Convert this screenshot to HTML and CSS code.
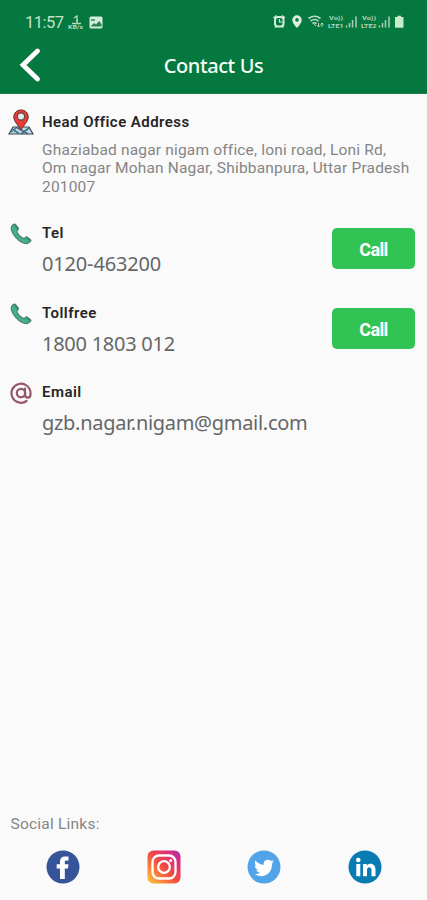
FILE: index.html
```html
<!DOCTYPE html>
<html lang="en">
<head>
<meta charset="utf-8">
<title>Contact Us</title>
<link rel="stylesheet" href="styles.css">
</head>
<body>
<svg width="0" height="0" class="defs" aria-hidden="true">
  <symbol id="phone" viewBox="0 0 22 22">
    <path d="M3.300 1.500 1.400 3.700C.2 9.700 9.200 20.400 17 20.700l3.400-2.300c.7-.6.6-1.300 0-1.800l-3-2.300c-.8-.5-1.500-.4-2 .2l-1.100 1.300C10.800 14.800 7.400 11.200 6.700 8.100L8 6.700c.6-.6.5-1.200.1-1.900L5.500 1.700c-.7-.8-1.500-.9-2.200-.2Z" fill="#3fb48e" stroke="#527d70" stroke-width="1.200"/>
    <path d="m5 2.500 2.600 3.200M16.800 14.900l3 2.700" stroke="#357d67" stroke-width="1.200"/>
  </symbol>
</svg>
<header class="header">
  <div class="status">
    <span class="time">11:57</span>
    <svg class="speed" width="16" height="16" viewBox="0 0 16 16"><path d="m6 4 3-2v7M4 9.500h9M10 6.500H8" fill="none" stroke="#b6d8bf" stroke-width="1.300"/><text x="0" y="14.500" class="tiny" textLength="15" lengthAdjust="spacingAndGlyphs">KB/s</text></svg>
    <svg class="photo" width="14" height="13" viewBox="0 0 14 13"><rect x=".5" y=".5" width="13" height="12" rx="1.500" fill="#d6ebd9"/><path d="m2 10 3-3 2 1.500L10 5l2.500 3v2.500H2Z" fill="#28854e"/><path d="M2 3h4v2H2Z" fill="#56a174"/></svg>
    <svg class="indicators" width="134" height="16" viewBox="0 0 134 16">
      <g fill="none" stroke="#d7ecd9">
        <rect x="3" y="3" width="8.500" height="9.500" rx="3" stroke-width="2"/>
        <path d="m1.500 4 3-2.500M10 1.500l3 2.500M3 13.500l2-1.500M9.500 12l2 1.500" stroke-width="1.500"/>
        <path d="M7.500 5v3H10" stroke-width="1.200"/>
      </g>
      <path d="M25 1.300A4.700 4.700 0 0 0 20.300 6c0 3.500 4.700 8 4.700 8s4.700-4.500 4.700-8A4.700 4.700 0 0 0 25 1.300Z" fill="#def0df"/><circle cx="25" cy="5.900" r="1.800" fill="#04783e"/>
      <g fill="none" stroke="#b9d9c1" stroke-width="1.600"><path d="M36.500 4.500q6-4.500 12 0M38.500 7q4-3 8 0M40.500 9.500q2-1.500 4 0"/><path d="m42 10 2 2M46.500 9v4m-1.500-1.500 1.500 1.500 1.500-1.500M50 13V9m-1.500 1.500L50 9l1.500 1.500" stroke-width="1"/></g>
      <g class="lte"><text x="57" y="6.300" textLength="14" lengthAdjust="spacingAndGlyphs">Vo))</text><text x="56" y="14" textLength="15.500" lengthAdjust="spacingAndGlyphs">LTE1</text><text x="90" y="6.300" textLength="14" lengthAdjust="spacingAndGlyphs">Vo))</text><text x="89" y="14" textLength="15.500" lengthAdjust="spacingAndGlyphs">LTE2</text></g>
      <path d="M74.500 13.500v-2M77.500 13.500V9M80.500 13.500V6M84 13.500V2.500M107.500 13.500v-2M110.500 13.500V9M113.500 13.500V6M117 13.500V2.500" stroke="#a9d0b5" stroke-width="1.500"/>
      <path d="M123.500 3h2V1.700h3.500V3h2q.5 0 .5.500V13q0 .8-.8.800h-7q-.7 0-.7-.8V3.500q0-.5.500-.5Z" fill="#c8edc9"/>
    </svg>
  </div>
  <div class="appbar">
    <svg class="back" width="22" height="36" viewBox="0 0 22 36"><path d="M18.500 4 4 18l14.500 14" fill="none" stroke="#fff" stroke-width="4.800" stroke-linecap="round"/></svg>
    <h1 class="title">Contact Us</h1>
  </div>
</header>
<main class="main">
  <section class="row address">
    <svg class="icon" width="26" height="26" viewBox="0 0 26 26">
      <path d="M5 18h16l4 7H1Z" fill="#bfd9e5" stroke="#354854" stroke-width="1.200"/>
      <path d="m4 20 7 4.500M8 18l12 7M21 19l-8 6M3 23l5-4" stroke="#446c83" stroke-width="1.600"/>
      <path d="M13 1C8.700 1 5.800 4 5.800 8c0 4.500 4.500 8 7.200 13 2.700-5 7.200-8.500 7.200-13C20.200 4 17.300 1 13 1Z" fill="#e63c32" stroke="#5e3030" stroke-width="1"/>
      <circle cx="13" cy="7.500" r="3.600" fill="#dfecef" stroke="#66474a" stroke-width="1.200"/>
    </svg>
    <div class="info"><h2 class="label head">Head Office Address</h2><p class="street">Ghaziabad nagar nigam office, loni road, Loni Rd,<br>Om nagar Mohan Nagar, Shibbanpura, Uttar Pradesh<br>201007</p></div>
  </section>
  <section class="row">
    <svg class="icon phone"><use href="#phone"/></svg>
    <div class="info"><h2 class="label">Tel</h2><p class="value">0120-463200</p></div>
    <button class="call">Call</button>
  </section>
  <section class="row">
    <svg class="icon phone"><use href="#phone"/></svg>
    <div class="info"><h2 class="label">Tollfree</h2><p class="value toll">1800 1803 012</p></div>
    <button class="call">Call</button>
  </section>
  <section class="row">
    <svg class="icon phone" viewBox="0 0 22 22"><g fill="none" stroke="#95566c" stroke-linecap="round"><path d="M16.500 19A9.500 9.500 0 1 1 20.500 11v1.500c0 4.200-5.500 4.200-5.500 0V6.500" stroke-width="2.200"/><circle cx="11" cy="11" r="4.200" stroke-width="2.200"/></g></svg>
    <div class="info"><h2 class="label">Email</h2><p class="value mail">gzb.nagar.nigam@gmail.com</p></div>
  </section>
</main>
<footer class="footer">
  <p class="social-label">Social Links:</p>
  <nav class="social">
    <svg viewBox="0 0 34 34"><circle cx="17" cy="17" r="16.500" fill="#35549a"/><path d="M14 29V18.500h-3.300v-4.300H14v-2.700c0-3.300 2-5 5-5h3.500v4h-2c-1.300 0-1.700.6-1.700 1.700v2h3.700l-.6 4.300h-3.100V29Z" fill="#fff"/></svg>
    <svg viewBox="0 0 34 34"><defs><linearGradient id="ig" x1="0" y1="1" x2="1" y2="0"><stop stop-color="#ffc83c"/><stop offset=".25" stop-color="#fb873b"/><stop offset=".5" stop-color="#f34a42"/><stop offset=".75" stop-color="#e33072"/><stop offset="1" stop-color="#aa2ab5"/></linearGradient></defs><rect x=".5" y=".5" width="33" height="33" rx="6" fill="url(#ig)"/><g fill="none" stroke="#fff" stroke-width="2.300"><rect x="5.500" y="5.500" width="23" height="23" rx="6.500"/><circle cx="17" cy="17" r="5.800"/></g><circle cx="23.700" cy="10.500" r="1.500" fill="#fff"/></svg>
    <svg viewBox="0 0 34 34"><circle cx="17" cy="17" r="16.500" fill="#51a4e8"/><path d="M27 11.500c-.8.400-1.500.6-2.300.7.800-.5 1.400-1.200 1.700-2.100-.8.500-1.700.8-2.600 1a4.100 4.100 0 0 0-7 3.700c-3.400-.2-6.400-1.800-8.400-4.300-1.100 1.900-.5 4.300 1.300 5.500-.7 0-1.300-.2-1.900-.5 0 2 1.400 3.700 3.300 4.100-.6.200-1.200.2-1.900.1.500 1.600 2 2.800 3.900 2.800A8.300 8.300 0 0 1 8 24.200C16 29.200 25 24 25 14.500v-1c.8-.5 1.500-1.200 2-2Z" fill="#fff"/></svg>
    <svg viewBox="0 0 34 34"><circle cx="17" cy="17" r="16.500" fill="#087bb2"/><g fill="#fff"><circle cx="10.300" cy="10" r="2.300"/><path d="M8.300 14h4v12.300h-4ZM15 14h3.800v1.700c2.500-3.300 8.700-2.200 8.700 3.800v6.800h-4v-6.300c0-4-4.500-3.400-4.500-.3v6.600h-4Z"/></g></svg>
  </nav>
</footer>
</body>
</html>
```
FILE: styles.css
```css
* { box-sizing: border-box; }
body { margin: 0; height: 900px; display: flex; flex-direction: column; background: #fafafa; font-family: Roboto, sans-serif; overflow: hidden; }
h1, h2, p { margin: 0; }
.defs { position: absolute; }
.header { height: 94px; background: #04783e; border-bottom: 1px solid #21804c; flex: none; }
.status { height: 44px; padding: 0 21px 0 25px; display: flex; align-items: center; }
.time { width: 43px; font-size: 16.500px; letter-spacing: -.5px; color: #c4e1cc; white-space: nowrap; }
.photo { margin-left: 5px; }
.indicators { margin-left: auto; }
.tiny { font: 700 5px Roboto, sans-serif; fill: #b6d8bf; }
.lte { font: 700 6px Roboto, sans-serif; fill: #b3d5bd; }
.appbar { height: 49px; display: grid; grid-template-columns: 42px 1fr 42px; align-items: center; }
.back { margin: -7px 0 0 19px; }
.title { margin-top: -6px; text-align: center; font: 500 20px/28px "Noto Sans", sans-serif; letter-spacing: -.4px; color: #f7fff8; }
.main { flex: 1; padding: 13px 12px 0 10px; }
.row { height: 79.700px; display: flex; align-items: flex-start; }
.address { height: 115px; }
.icon { flex: none; margin-top: 2px; margin-left: -2px; width: 26px; height: 26px; }
.phone { margin: 1px 2px 0 0; width: 22px; height: 22px; }
.info { flex: 1; margin: -4px 0 0 8px; white-space: nowrap; }
.address .info { margin-top: 0; }
.label { font-size: 15px; line-height: 30px; font-weight: 600; letter-spacing: .45px; color: #252525; }
.street { margin-top: 3.500px; font-size: 15.500px; line-height: 18.500px; letter-spacing: .18px; color: #858585; }
.value { margin-top: 1px; font: 20px/30px "Noto Sans", sans-serif; letter-spacing: -.16px; color: #666; }
.toll { letter-spacing: -.26px; }
.mail { letter-spacing: -.3px; }
.call { margin-top: 6px; width: 83px; height: 41px; flex: none; border: 0; border-radius: 5px; background: #31c354; color: #fff; font: 700 18px Roboto, sans-serif; letter-spacing: -.6px; padding: 2px 0 0; }
.footer { height: 88px; }
.social-label { padding-left: 10.500px; font-size: 15.500px; line-height: 24px; letter-spacing: .22px; color: #858585; }
.social { display: flex; justify-content: space-between; padding: 14px 45px 0 46px; }
.social svg { width: 34px; height: 34px; }
```
